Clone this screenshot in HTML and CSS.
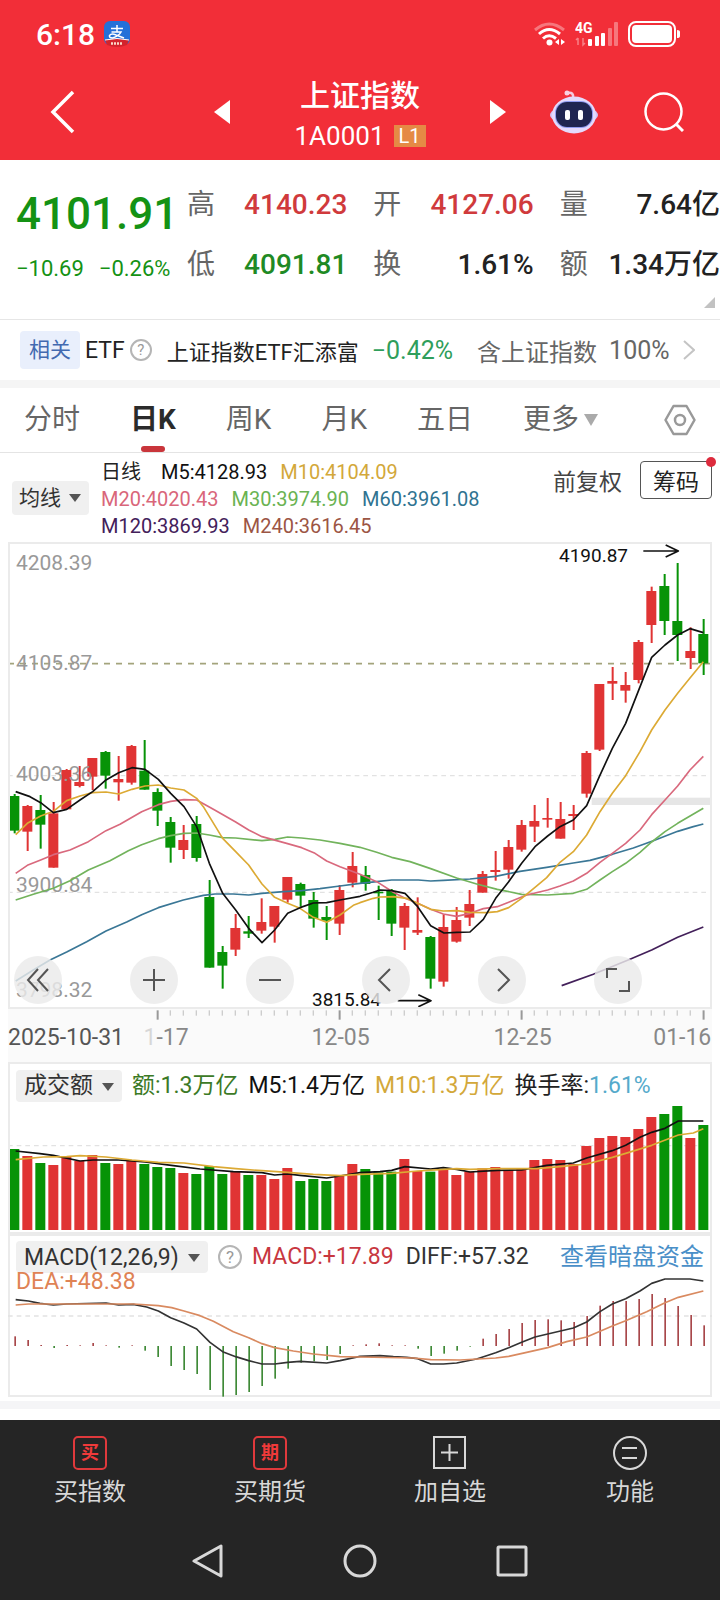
FILE: index.html
```html
<!DOCTYPE html>
<html lang="zh-CN">
<head>
  <meta charset="UTF-8">
  <meta name="viewport" content="width=device-width, initial-scale=1">
  <title>上证指数 1A0001</title>
  <link rel="stylesheet" href="styles.css">
</head>
<body>

  <header class="top">
    <div class="status">
      <span class="time">6:18</span>
      <svg class="alipay" viewBox="0 0 26 26" width="26" height="26">
        <rect width="26" height="24" rx="6" fill="#2470d8"/>
        <path d="M1 19Q13 16 25 19L23 24Q13 28 3 24Z" fill="#d3232c"/>
        <path d="M1 19Q13 16 25 19" fill="none" stroke="#fff" stroke-width="1"/>
        <path d="M7 7.500H19M13 4V11M7.500 11H17Q15 15 8.500 17Q5 17 5.500 14.500Q7.500 12 12 14L20 17" fill="none" stroke="#fff" stroke-width="1.500"/>
        <path d="M7 22.500H19" stroke="#fbd9c8" stroke-width="2.500" stroke-dasharray="2 1"/>
      </svg>
      <div class="signals">
        <svg viewBox="0 0 32 26" width="32" height="26" fill="none" stroke="#fff" stroke-width="3">
          <path d="M1 9Q15 -3 30 9" opacity=".35"/>
          <path d="M5 13Q15 4 26 13"/>
          <path d="M9 17.500Q15 12 22 17.500"/>
          <circle cx="15.500" cy="21.500" r="3" fill="#fff" stroke="none"/>
          <path d="M25 18v6l-4-3zM27 18v6l4-3z" fill="#fff" stroke="none"/>
        </svg>
        <svg viewBox="0 0 44 26" width="44" height="26">
          <text class="net" x="0" y="12">4G</text>
          <path d="M3 24V17M1 19l2-2M8 17v7l2-2" stroke="#fff" stroke-width="1.500" fill="none" opacity=".4"/>
          <g fill="#fff">
            <rect x="13" y="18" width="4" height="7" rx="1"/>
            <rect x="20" y="15" width="4" height="10" rx="1"/>
            <rect x="26" y="12" width="4" height="13" rx="1"/>
            <rect x="33" y="7" width="4" height="18" rx="1" opacity=".35"/>
            <rect x="39" y="1" width="4" height="24" rx="1" opacity=".35"/>
          </g>
        </svg>
        <svg viewBox="0 0 52 26" width="52" height="26">
          <rect x="1" y="1" width="46" height="24" rx="7" fill="none" stroke="#fff" stroke-width="2"/>
          <rect x="4" y="4" width="40" height="18" rx="4" fill="#fff"/>
          <path d="M49 9q3 0 3 2v4q0 2-3 2z" fill="#fff"/>
        </svg>
      </div>
    </div>

    <nav class="titlebar">
      <a href="#" class="back" aria-label="返回">
        <svg viewBox="0 0 26 44" width="26" height="44" fill="none" stroke="#fff" stroke-width="3.500"><path d="M23 2L3 22L23 42"/></svg>
      </a>
      <div class="switcher">
        <button type="button" aria-label="上一个"><svg viewBox="0 0 16 24" width="16" height="24"><path d="M16 0V24L0 12Z" fill="#fff"/></svg></button>
        <div class="name">
          <h1>上证指数</h1>
          <p>1A0001 <span class="level">L1</span></p>
        </div>
        <button type="button" aria-label="下一个"><svg viewBox="0 0 16 24" width="16" height="24"><path d="M0 0V24L16 12Z" fill="#fff"/></svg></button>
      </div>
      <div class="tools">
        <button type="button" aria-label="智能助手">
          <svg viewBox="0 0 48 44" width="48" height="44">
            <path d="M23 8Q24 2 18 3" fill="none" stroke="#f4c9e0" stroke-width="2.500"/>
            <circle cx="17" cy="3" r="2.500" fill="#f9cfe0"/>
            <ellipse cx="24" cy="25" rx="24" ry="9" fill="#d3c6f7"/>
            <ellipse cx="24" cy="25" rx="22" ry="18.500" fill="#e4dafc"/>
            <rect x="5" y="11" width="38" height="27" rx="12" fill="#8f9bf0"/>
            <rect x="6" y="12" width="36" height="25" rx="11" fill="#1f2550"/>
            <rect x="15" y="20" width="5" height="10" rx="2" fill="#fff"/>
            <rect x="28" y="20" width="5" height="10" rx="2" fill="#fff"/>
          </svg>
        </button>
        <button type="button" aria-label="搜索">
          <svg viewBox="0 0 40 40" width="40" height="40" fill="none" stroke="#fff" stroke-width="2.500"><circle cx="19.500" cy="19.500" r="18"/><path d="M32 32L39 39" stroke-width="3"/></svg>
        </button>
      </div>
    </nav>
  </header>

  <main>
    <section class="quote">
      <div class="price">
        <strong>4101.91</strong>
        <p><span>−10.69</span><span>−0.26%</span></p>
      </div>
      <dl class="stats">
        <div><dt>高</dt><dd class="up">4140.23</dd></div>
        <div><dt>开</dt><dd class="up">4127.06</dd></div>
        <div><dt>量</dt><dd>7.64亿</dd></div>
        <div><dt>低</dt><dd class="down">4091.81</dd></div>
        <div><dt>换</dt><dd>1.61%</dd></div>
        <div><dt>额</dt><dd>1.34万亿</dd></div>
      </dl>
      <span class="corner"></span>
    </section>

    <a href="#" class="etf">
      <span class="tag">相关</span>
      <span class="etf-label">ETF</span>
      <span class="help">?</span>
      <span class="etf-name">上证指数ETF汇添富</span>
      <span class="etf-change">−0.42%</span>
      <span class="etf-hold">含上证指数</span>
      <span class="etf-pct">100%</span>
      <svg viewBox="0 0 12 20" width="12" height="20" fill="none" stroke="#c4c4c4" stroke-width="2"><path d="M1 1L11 10L1 19"/></svg>
    </a>

    <nav class="tabs">
      <a href="#">分时</a>
      <a href="#" class="active">日K</a>
      <a href="#">周K</a>
      <a href="#">月K</a>
      <a href="#">五日</a>
      <a href="#" class="more">更多</a>
      <button type="button" class="setting" aria-label="设置">
        <svg viewBox="0 0 32 32" width="32" height="32" fill="none" stroke="#999" stroke-width="2.500"><path d="M9.500 2H22.500L30.500 16L22.500 30H9.500L1.500 16Z" stroke-linejoin="round"/><circle cx="16" cy="16" r="5"/></svg>
      </button>
    </nav>

    <section class="legend">
      <label class="picker"><select aria-label="均线"><option>均线</option></select></label>
      <ul class="ma">
        <li class="day">日线</li>
        <li class="m5">M5:4128.93</li>
        <li class="m10">M10:4104.09</li>
        <li class="m20">M20:4020.43</li>
        <li class="m30">M30:3974.90</li>
        <li class="m60">M60:3961.08</li>
        <li class="m120">M120:3869.93</li>
        <li class="m240">M240:3616.45</li>
      </ul>
      <div class="adjust">
        <button type="button" class="plain">前复权</button>
        <button type="button" class="chips">筹码</button>
      </div>
    </section>

    <section class="panel kline">
      <svg id="kline" class="plot" viewBox="0 0 2112 1400"></svg>
      <div class="controls">
        <button type="button" aria-label="最早"><svg viewBox="0 0 24 24"><path d="M12 1L2 12L12 23M22 1L12 12L22 23"/></svg></button>
        <button type="button" aria-label="放大"><svg viewBox="0 0 24 24"><path d="M1 12H23M12 1V23"/></svg></button>
        <button type="button" aria-label="缩小"><svg viewBox="0 0 24 24"><path d="M1 12H23"/></svg></button>
        <button type="button" aria-label="左移"><svg viewBox="0 0 24 24"><path d="M16 1L5 12L16 23"/></svg></button>
        <button type="button" aria-label="右移"><svg viewBox="0 0 24 24"><path d="M8 1L19 12L8 23"/></svg></button>
        <button type="button" aria-label="全屏"><svg viewBox="0 0 24 24"><path d="M1 10V1H11M23 13V23H13"/></svg></button>
      </div>
    </section>
    <svg id="axis" class="plot axis" viewBox="0 0 2112 160"></svg>

    <section class="panel">
      <div class="row">
        <label class="picker big"><select aria-label="指标"><option>成交额</option></select></label>
        <span class="amount">额:1.3万亿</span>
        <span class="m5">M5:1.4万亿</span>
        <span class="m10">M10:1.3万亿</span>
        <span class="turnover">换手率:<b>1.61%</b></span>
      </div>
      <svg id="volume" class="plot" viewBox="0 0 2112 390"></svg>
    </section>

    <section class="panel">
      <div class="row macd-row">
        <label class="picker big"><select aria-label="指标"><option>MACD(12,26,9)</option></select></label>
        <span class="help">?</span>
        <span class="macd">MACD:+17.89</span>
        <span class="diff">DIFF:+57.32</span>
        <a href="#" class="dark-pool">查看暗盘资金</a>
      </div>
      <div class="macd-plot">
        <span class="dea">DEA:+48.38</span>
        <svg id="macd" class="plot" viewBox="0 0 2112 369"></svg>
      </div>
    </section>
    <div class="divider"></div>
  </main>

  <footer class="bottom">
    <nav class="actions">
      <a href="#"><span class="seal">买</span>买指数</a>
      <a href="#"><span class="seal">期</span>买期货</a>
      <a href="#"><svg viewBox="0 0 34 34" width="34" height="34" fill="none" stroke="#d8d8d8" stroke-width="2"><rect x="1" y="1" width="31" height="31"/><path d="M8 16.500H25M16.500 8V25"/></svg>加自选</a>
      <a href="#"><svg viewBox="0 0 34 34" width="34" height="34" fill="none" stroke="#d8d8d8" stroke-width="2"><circle cx="17" cy="17" r="16"/><path d="M9 12H24M9 22H24"/></svg>功能</a>
    </nav>
    <div class="sysnav">
      <button type="button" aria-label="后退"><svg viewBox="0 0 34 34"><path d="M30 2V32L3 17Z" stroke-linejoin="round"/></svg></button>
      <button type="button" aria-label="主页"><svg viewBox="0 0 34 34"><circle cx="17" cy="17" r="15"/></svg></button>
      <button type="button" aria-label="最近任务"><svg viewBox="0 0 34 34"><rect x="3" y="3" width="28" height="28" rx="1"/></svg></button>
    </div>
  </footer>

  <script src="charts.js"></script>
</body>
</html>
```
FILE: styles.css
```css
* {
  box-sizing: border-box;
}
body {
  margin: 0;
  font-family: Roboto, "Noto Sans CJK SC", sans-serif;
  background: #fff;
  color: #222;
}
h1, p, dl, dd, ul {
  margin: 0;
  padding: 0;
}
a {
  color: inherit;
  text-decoration: none;
}
button {
  padding: 0;
  border: none;
  background: none;
  font: inherit;
  color: inherit;
  cursor: pointer;
}
svg {
  display: block;
}

/* header */
.top {
  background: #f22e38;
  color: #fff;
}
.status {
  display: flex;
  align-items: center;
  height: 68px;
  padding: 0 40px 0 36px;
}
.time {
  font-size: 30px;
  font-weight: 500;
  margin-right: 9px;
}
.signals {
  display: flex;
  gap: 9px;
  margin-left: auto;
}
.net {
  font-size: 14px;
  font-weight: 700;
  fill: #fff;
}
.titlebar {
  display: grid;
  grid-template-columns: 1fr 292px 1fr;
  align-items: center;
  height: 92px;
  padding-bottom: 4px;
}
.back {
  padding-left: 50px;
}
.switcher {
  display: flex;
  align-items: center;
  justify-content: space-between;
}
.name {
  padding-top: 8px;
  text-align: center;
}
.name h1 {
  font-size: 30px;
  font-weight: 500;
  line-height: 40px;
}
.name p {
  display: flex;
  align-items: center;
  justify-content: center;
  gap: 9px;
  font-size: 26px;
  line-height: 40px;
}
.level {
  padding: 0 5px;
  background: #e58a45;
  font-size: 20px;
  line-height: 22px;
}
.tools {
  display: flex;
  align-items: center;
  justify-content: flex-end;
  gap: 46px;
  padding-right: 36px;
}

/* quote */
.quote {
  position: relative;
  display: flex;
  padding: 17px 0 27px;
  border-bottom: 1px solid #e6e6e6;
}
.price {
  width: 187px;
  padding-left: 16px;
  color: #149214;
}
.price strong {
  display: block;
  font-size: 44px;
  font-weight: 500;
  line-height: 74px;
}
.price p {
  display: flex;
  gap: 15px;
  font-size: 22px;
  line-height: 36px;
}
.stats {
  flex: 1;
  display: grid;
  grid-template-columns: 1fr 1fr 1fr;
  column-gap: 26px;
  row-gap: 5px;
  font-size: 28px;
  line-height: 55px;
}
.stats div {
  display: flex;
  justify-content: space-between;
}
.stats dt {
  color: #666;
}
.stats dd {
  font-weight: 500;
}
.up {
  color: #d03a3c;
}
.down {
  color: #1f8a24;
}
.corner {
  position: absolute;
  right: 5px;
  bottom: 11px;
  border-left: 11px solid transparent;
  border-bottom: 11px solid #c2c2c2;
}

/* related etf */
.etf {
  display: flex;
  align-items: center;
  height: 60px;
  padding: 0 20px;
  white-space: nowrap;
}
.tag {
  padding: 0 9px;
  border-radius: 4px;
  background: #e9effc;
  color: #4269b0;
  font-size: 21px;
  line-height: 38px;
}
.etf-label {
  margin: 0 5px;
  font-size: 23px;
}
.help {
  width: 22px;
  height: 22px;
  border: 2px solid #b5b5b5;
  border-radius: 50%;
  color: #999;
  font-size: 15px;
  line-height: 18px;
  text-align: center;
}
.etf-name {
  margin: 0 13px 0 15px;
  font-size: 22px;
}
.etf-change {
  color: #2f9e5b;
  font-size: 25px;
}
.etf-hold {
  margin: 0 12px 0 24px;
  color: #666;
  font-size: 24px;
}
.etf-pct {
  color: #666;
  font-size: 25px;
}
.etf svg {
  margin-left: 13px;
}

/* tabs */
.tabs {
  display: flex;
  align-items: center;
  gap: 50px;
  height: 73px;
  padding: 0 24px;
  border-top: 8px solid #f5f5f5;
  border-bottom: 1px solid #e4e4e4;
  color: #666;
  font-size: 28px;
  line-height: 64px;
}
.tabs .active {
  position: relative;
  color: #2b2b2b;
  font-weight: 700;
}
.tabs .active::after {
  content: "";
  position: absolute;
  left: 50%;
  bottom: 0;
  width: 24px;
  height: 6px;
  margin-left: -12px;
  border-radius: 3px;
  background: #c9353b;
}
.more {
  display: flex;
  align-items: center;
  gap: 5px;
}
.more::after {
  content: "";
  border: 7px solid transparent;
  border-top: 12px solid #aaa;
  border-bottom: none;
}
.setting {
  margin-left: auto;
}

/* moving averages */
.legend {
  display: flex;
  align-items: center;
  height: 89px;
  padding: 0 8px 0 12px;
}
.picker {
  position: relative;
  display: inline-flex;
}
.picker select {
  appearance: none;
  height: 34px;
  padding: 0 28px 0 7px;
  border: none;
  border-radius: 4px;
  background: #f0f0f0;
  color: #333;
  font-family: inherit;
  font-size: 21px;
}
.picker::after {
  content: "";
  position: absolute;
  right: 8px;
  top: 13px;
  border: 6px solid transparent;
  border-top: 8px solid #555;
  border-bottom: none;
  pointer-events: none;
}
.picker.big select {
  height: 32px;
  padding: 0 29px 0 8px;
  font-size: 23px;
}
.ma {
  flex: 1;
  display: flex;
  flex-wrap: wrap;
  column-gap: 13px;
  max-width: 400px;
  margin: 4px 0 0 12px;
  list-style: none;
  font-size: 20px;
  line-height: 27px;
}
.ma .day {
  margin-right: 7px;
}
.ma .m10, .ma .m60 {
  margin-right: 12px;
}
.m5 { color: #111; }
.m10 { color: #d3a83a; }
.m20 { color: #d9667a; }
.m30 { color: #6ab352; }
.m60 { color: #2f7391; }
.m120 { color: #43205a; }
.m240 { color: #9c5544; }
.adjust {
  display: flex;
  align-self: flex-start;
  gap: 18px;
  margin: 8px 0 0 auto;
  font-size: 23px;
}
.plain {
  color: #444;
}
.chips {
  position: relative;
  height: 38px;
  padding: 0 12px;
  border: 1px solid #555;
  border-radius: 4px;
}
.chips::after {
  content: "";
  position: absolute;
  top: -5px;
  right: -5px;
  width: 10px;
  height: 10px;
  border-radius: 50%;
  background: #dd2b3d;
}

/* charts */
.panel {
  position: relative;
  margin: 0 8px;
  outline: 2px solid #ebebeb;
  outline-offset: -2px;
}
.plot {
  width: 100%;
  height: auto;
}
.axis {
  width: auto;
  margin: 0 8px;
  background: #fafafa;
}
.controls {
  position: absolute;
  left: 6px;
  right: 70px;
  bottom: 5px;
  display: flex;
  justify-content: space-between;
}
.controls button {
  display: flex;
  align-items: center;
  justify-content: center;
  width: 48px;
  height: 48px;
  border-radius: 50%;
  background: rgba(234, 234, 234, 0.82);
}
.controls svg {
  width: 24px;
  height: 24px;
  fill: none;
  stroke: #555;
  stroke-width: 2;
}
.row {
  display: flex;
  align-items: center;
  gap: 10px;
  height: 42px;
  padding: 6px 8px 0;
  font-size: 23px;
  line-height: 32px;
  white-space: nowrap;
}
.amount {
  color: #3c7a26;
}
.turnover b {
  color: #55aacb;
  font-weight: 400;
}
.macd-row {
  height: 40px;
  padding-top: 7px;
}
.macd-row .help {
  width: 24px;
  height: 24px;
  font-size: 17px;
  line-height: 20px;
}
.macd {
  color: #c8373f;
}
.diff {
  margin-left: 2px;
  color: #333;
}
.dark-pool {
  margin-left: auto;
  color: #4a8fc8;
  font-size: 24px;
}
.macd-plot {
  position: relative;
}
.dea {
  position: absolute;
  left: 8px;
  top: -8px;
  color: #df8355;
  font-size: 23px;
  line-height: 32px;
}
.divider {
  height: 8px;
  margin: 4px 0 11px;
  background: #f5f5f7;
}

/* svg text and strokes, in chart units (3 per px) */
.scale {
  fill: #999;
  font-size: 63px;
}
.mark {
  fill: #111;
  font-size: 57px;
}
.date {
  fill: #888;
  font-size: 69px;
}
.date.first {
  fill: #555;
}
.line {
  fill: none;
  stroke-width: 5;
  stroke-linejoin: round;
}
.grid {
  stroke: #e2e2e2;
  stroke-width: 4;
  stroke-dasharray: 14 12;
}
.last {
  stroke: #a3a47c;
  stroke-width: 5;
  stroke-dasharray: 18 18;
}

/* bottom bars */
.bottom {
  background: #252525;
  color: #d8d8d8;
}
.actions {
  display: grid;
  grid-template-columns: repeat(4, 1fr);
  padding-top: 16px;
}
.actions a {
  display: flex;
  flex-direction: column;
  align-items: center;
  gap: 4px;
  font-size: 24px;
  line-height: 36px;
}
.seal {
  width: 34px;
  height: 34px;
  border: 2px solid #e0393c;
  border-radius: 5px;
  color: #f03a3a;
  font-size: 18px;
  font-weight: 700;
  line-height: 30px;
  text-align: center;
}
.sysnav {
  display: flex;
  justify-content: center;
  gap: 118px;
  padding: 34px 0 22px;
}
.sysnav svg {
  width: 34px;
  height: 34px;
  fill: none;
  stroke: #d8d8d8;
  stroke-width: 3;
}
```
FILE: charts.js
```js
const RED = "#e03434";
const GREEN = "#079307";
const STEP = 39;
const FIRST = 43;

// [color, high, top, bottom, low]
const candles = [
  ["g", 342, 348, 452, 460], ["r", 375, 378, 455, 513], ["g", 345, 390, 434, 506], ["r", 366, 400, 563, 563],
  ["r", 267, 270, 388, 388], ["r", 258, 306, 318, 322], ["r", 234, 234, 290, 330], ["g", 213, 216, 287, 326],
  ["r", 228, 297, 307, 362], ["r", 195, 198, 308, 314], ["g", 180, 272, 329, 329], ["g", 325, 336, 392, 438],
  ["g", 411, 426, 503, 548], ["r", 435, 480, 510, 537], ["g", 408, 432, 534, 545], ["g", 600, 651, 863, 863],
  ["g", 798, 816, 857, 926], ["r", 702, 744, 809, 828], ["g", 708, 754, 761, 774], ["r", 655, 726, 752, 761],
  ["r", 678, 678, 740, 788], ["r", 591, 591, 659, 668], ["g", 608, 612, 647, 680], ["g", 636, 660, 716, 743],
  ["g", 678, 711, 722, 780], ["r", 615, 630, 731, 765], ["r", 516, 558, 608, 622], ["g", 558, 585, 612, 632],
  ["g", 617, 635, 640, 720], ["g", 627, 633, 731, 768], ["r", 669, 678, 743, 810], ["r", 652, 750, 758, 765],
  ["g", 768, 771, 896, 926], ["r", 703, 741, 905, 920], ["r", 681, 720, 785, 788], ["r", 630, 672, 713, 738],
  ["r", 573, 582, 638, 638], ["r", 513, 570, 576, 602], ["r", 480, 501, 569, 596], ["r", 420, 435, 509, 515],
  ["r", 375, 423, 440, 486], ["r", 354, 414, 419, 443], ["r", 366, 417, 476, 476], ["r", 375, 402, 408, 450],
  ["r", 213, 219, 341, 353], ["r", 12, 12, 209, 213], ["r", -39, 3, 11, 60], ["r", -24, 15, 32, 68],
  ["r", -120, -114, 0, 10], ["r", -280, -267, -165, -111], ["g", -318, -282, -177, -135], ["g", -351, -177, -135, -57],
  ["r", -158, -87, -66, -33], ["g", -183, -138, -50, -15]
];

const averages = [
  ["#43205a", "1685,917 1780,883 1890,838 1955,810 2033,772 2110,741"],
  ["#3a7796", "47,903 100,870 150,840 200,816 260,785 318,753 380,726 425,704 475,683 550,660 610,646 645,642 700,642 746,645 786,640 850,635 905,632 960,626 1020,618 1080,610 1130,605 1175,600 1255,600 1292,603 1330,601 1410,597 1487,589 1560,574 1640,562 1720,549 1770,541 1837,523 1900,504 1960,482 2033,454 2080,440 2110,432"],
  ["#72b35c", "47,660 100,643 160,625 210,602 265,570 330,542 385,512 425,494 475,476 512,467 552,460 590,459 628,465 668,473 707,474 786,482 825,478 863,471 905,474 960,480 1020,490 1080,502 1130,517 1175,532 1230,545 1292,566 1370,594 1430,612 1492,628 1565,643 1643,645 1720,640 1760,628 1800,600 1837,575 1877,550 1920,517 1955,486 1995,455 2033,430 2110,385"],
  ["#d9697d", "47,580 82,556 122,540 160,524 210,510 265,485 318,452 360,433 425,395 475,374 512,364 552,359 590,360 640,388 707,426 746,450 786,470 860,490 905,503 945,520 980,543 1020,560 1080,583 1130,605 1180,637 1215,655 1253,670 1292,688 1330,702 1370,709 1410,700 1450,686 1492,680 1526,667 1580,645 1643,630 1680,618 1720,603 1760,580 1800,547 1837,520 1877,490 1920,450 1955,404 1995,360 2033,318 2070,270 2110,229"],
  ["#dcaa34", "47,464 82,430 122,408 160,394 200,362 240,348 278,338 318,336 356,342 396,328 435,318 475,315 512,324 552,330 590,355 610,380 668,475 707,515 746,555 786,612 824,652 863,670 900,685 940,712 980,727 1020,705 1060,676 1080,668 1120,655 1140,651 1180,650 1220,655 1253,670 1292,688 1330,693 1370,692 1410,697 1460,698 1492,695 1526,683 1565,655 1605,622 1640,593 1680,547 1720,515 1760,465 1800,395 1837,340 1877,287 1920,215 1955,150 1995,90 2033,40 2070,-6 2110,-55"],
  ["#111", "47,335 90,350 122,368 160,398 200,388 240,360 278,335 318,300 356,278 396,263 435,268 475,298 512,340 552,380 590,440 628,550 668,640 707,690 746,745 786,788 824,750 863,700 900,683 940,669 980,668 1020,660 1080,649 1120,637 1140,630 1175,632 1215,640 1253,680 1292,737 1332,759 1370,757 1410,756 1450,718 1487,655 1526,605 1565,550 1605,500 1643,468 1680,440 1720,420 1760,377 1798,290 1837,205 1877,130 1930,-5 1955,-68 1995,-105 2033,-135 2070,-154 2110,-142"]
];

const volumeTops = [
  282, 303, 324, 330, 306, 318, 300, 324, 327, 318, 327, 336, 339, 354, 357, 333, 357, 350,
  360, 360, 372, 339, 378, 372, 378, 360, 327, 342, 352, 350, 312, 348, 350, 342, 360, 350,
  340, 336, 345, 342, 315, 312, 315, 327, 273, 249, 243, 246, 222, 186, 177, 153, 249, 210
];
const volumeLines = [
  ["#111", "47,288 120,296 160,301 240,318 280,315 356,315 435,321 520,332 600,342 700,350 786,353 824,360 863,357 900,361 980,369 1020,363 1080,353 1140,350 1175,346 1215,335 1292,342 1330,338 1370,343 1410,351 1492,346 1565,345 1640,331 1720,324 1760,309 1837,287 1877,271 1920,247 1955,232 1995,220 2035,198 2110,198"],
  ["#dcaa34", "47,314 130,306 200,305 240,302 318,306 396,315 475,322 552,324 640,335 707,341 786,347 863,352 940,358 1020,362 1080,358 1175,355 1253,348 1370,341 1410,343 1492,341 1610,341 1680,335 1760,327 1837,307 1877,295 1955,271 2035,240 2080,234 2110,221"]
];

const macdBars = [
  29, 18, 3, -6, 3, 2, 9, 2, -5, 2, -14, -33, -60, -72, -84, -132, -152, -147,
  -138, -120, -98, -68, -50, -46, -42, -24, 2, 5, 8, 2, 2, -8, -30, -23, -14, -2,
  22, 36, 51, 69, 78, 80, 77, 72, 90, 121, 135, 135, 141, 156, 144, 120, 93, 62
];
const macdLines = [
  ["#333", "47,734 85,738 120,745 160,750 200,747 318,744 356,750 400,748 440,756 475,768 512,788 552,804 590,822 630,862 668,890 707,905 746,917 786,927 824,927 863,922 900,919 980,924 1020,917 1080,904 1140,902 1180,905 1220,907 1253,911 1292,927 1330,927 1370,924 1430,912 1487,893 1526,878 1565,862 1605,846 1643,837 1720,819 1760,801 1800,770 1837,747 1877,731 1920,708 1955,685 1995,672 2070,672 2110,678"],
  ["#d98a60", "47,750 85,747 400,747 475,752 515,758 552,768 600,782 640,799 700,830 746,848 786,866 824,878 880,888 940,897 1020,905 1080,906 1240,909 1292,914 1380,915 1487,909 1526,904 1580,892 1643,878 1700,860 1760,846 1837,813 1877,797 1940,770 1995,743 2035,727 2110,708"]
];

function color(i) {
  return candles[i][0] === "g" ? GREEN : RED;
}

function rect(x, y, w, h, fill) {
  return `<rect x="${x}" y="${y}" width="${w}" height="${h}" fill="${fill}"/>`;
}

function text(x, y, cls, value, anchor = "start") {
  return `<text x="${x}" y="${y}" class="${cls}" text-anchor="${anchor}">${value}</text>`;
}

function gridLine(y, cls = "grid") {
  return `<line x1="24" x2="2136" y1="${y}" y2="${y}" class="${cls}"/>`;
}

function lines(list) {
  return list.map(([stroke, points]) => `<polyline class="line" stroke="${stroke}" points="${points}"/>`).join("");
}

function draw(id, top, content) {
  document.getElementById(id).innerHTML = `<g transform="translate(-24 ${-top})">${content}</g>`;
}

function drawKline() {
  let out = gridLine(287) + gridLine(637) + gridLine(-49, "last");
  out += rect(1775, 353, 361, 22, "#e6e6e6");
  candles.forEach(([c, high, top, bottom, low], i) => {
    const x = FIRST + i * STEP;
    out += rect(x - 2, high, 6, low - high, color(i));
    out += rect(x - 15, top, 30, bottom - top, color(i));
  });
  out += text(48, -329, "scale", "4208.39");
  out += text(48, -29, "scale", "4105.87");
  out += text(48, 304, "scale", "4003.36");
  out += text(48, 636, "scale", "3900.84");
  out += text(48, 951, "scale", "3798.32");
  out += lines(averages);
  out += text(1677, -353, "mark", "4190.87");
  out += text(936, 979, "mark", "3815.84");
  out += `<path class="line" stroke="#111" d="M1930 -387H2033M1997 -405L2035 -387L1997 -369M1193 962H1291M1255 944L1293 962L1255 980"/>`;
  draw("kline", -414, out);
}

function drawAxis() {
  let out = "";
  for (let i = 11; i < candles.length; i++) {
    const major = [11, 25, 39, 53].includes(i);
    out += rect(FIRST + i * STEP - 2, 990, major ? 6 : 4, major ? 28 : 16, major ? "#999" : "#ccc");
  }
  out += text(566, 1095, "date", "11-17", "end");
  out += rect(24, 1030, 402, 100, "#fafafa");
  out += rect(426, 1030, 34, 100, "rgba(250, 250, 250, 0.7)");
  out += text(24, 1095, "date first", "2025-10-31");
  out += text(1022, 1095, "date", "12-05", "middle");
  out += text(1568, 1095, "date", "12-25", "middle");
  out += text(2134, 1095, "date", "01-16", "end");
  draw("axis", 986, out);
}

function drawVolume() {
  let out = gridLine(272);
  volumeTops.forEach((top, i) => {
    out += rect(FIRST + i * STEP - 15, top, 30, 525 - top, color(i));
  });
  draw("volume", 147, out + lines(volumeLines));
}

function drawMacd() {
  let out = gridLine(783);
  macdBars.forEach((v, i) => {
    out += rect(FIRST + i * STEP, v > 0 ? 873 - v : 873, 5, Math.abs(v), v > 0 ? "#a8474a" : "#3f8a37");
  });
  draw("macd", 657, out + lines(macdLines));
}

drawKline();
drawAxis();
drawVolume();
drawMacd();
```
